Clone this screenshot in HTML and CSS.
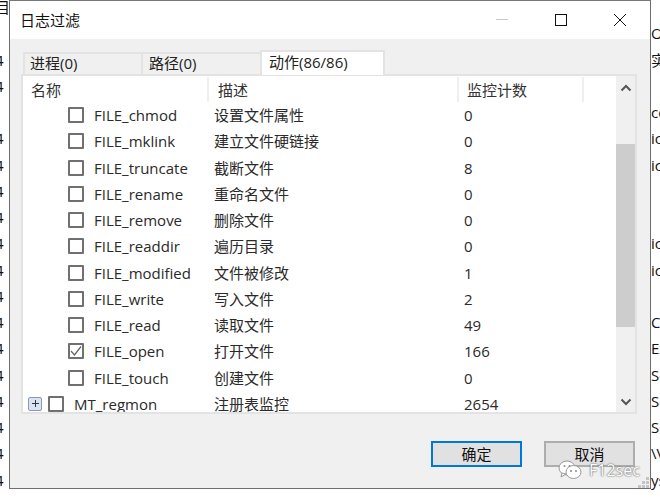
FILE: index.html
```html
<!DOCTYPE html>
<html lang="zh">
<head>
<meta charset="utf-8">
<title>日志过滤</title>
<link rel="stylesheet" href="styles.css">
</head>
<body>
<div class="desktop">
  <div class="strip strip-left">
    <div>目</div><div></div><div>4</div><div>4</div><div></div><div>4</div><div>4</div><div>4</div><div>4</div><div>4</div><div>4</div><div>4</div><div>4</div><div>4</div><div>4</div><div>4</div><div>4</div><div>4</div><div>4</div>
  </div>
  <div class="window">
    <div class="titlebar">
      <span class="title">日志过滤</span>
      <div class="controls">
        <svg class="ctl" width="14" height="14" viewBox="0 0 14 14"><path d="M1 6.500H13" stroke="#c8c8c8" fill="none"/></svg>
        <svg class="ctl" width="14" height="14" viewBox="0 0 14 14"><rect x="1.500" y="1.500" width="11" height="11" stroke="#111" fill="none"/></svg>
        <svg class="ctl" width="14" height="14" viewBox="0 0 14 14"><path d="M1 1L13 13M13 1L1 13" stroke="#111" fill="none"/></svg>
      </div>
    </div>
    <div class="body">
      <div class="tabs">
        <div class="tab tab-first">进程(0)</div>
        <div class="tab tab-second">路径(0)</div>
        <div class="tab tab-active">动作(86/86)</div>
      </div>
      <div class="panel">
        <div class="list">
          <div class="header">
            <div class="hcell hname">名称</div>
            <div class="hcell hdesc">描述</div>
            <div class="hcell hcount">监控计数</div>
            <div class="hcell hrest"></div>
          </div>
          <div class="row"><span class="name"><i class="box"></i>FILE_chmod</span><span class="desc">设置文件属性</span><span class="count">0</span></div>
          <div class="row"><span class="name"><i class="box"></i>FILE_mklink</span><span class="desc">建立文件硬链接</span><span class="count">0</span></div>
          <div class="row"><span class="name"><i class="box"></i>FILE_truncate</span><span class="desc">截断文件</span><span class="count">8</span></div>
          <div class="row"><span class="name"><i class="box"></i>FILE_rename</span><span class="desc">重命名文件</span><span class="count">0</span></div>
          <div class="row"><span class="name"><i class="box"></i>FILE_remove</span><span class="desc">删除文件</span><span class="count">0</span></div>
          <div class="row"><span class="name"><i class="box"></i>FILE_readdir</span><span class="desc">遍历目录</span><span class="count">0</span></div>
          <div class="row"><span class="name"><i class="box"></i>FILE_modified</span><span class="desc">文件被修改</span><span class="count">1</span></div>
          <div class="row"><span class="name"><i class="box"></i>FILE_write</span><span class="desc">写入文件</span><span class="count">2</span></div>
          <div class="row"><span class="name"><i class="box"></i>FILE_read</span><span class="desc">读取文件</span><span class="count">49</span></div>
          <div class="row"><span class="name"><i class="box"><svg width="12" height="12" viewBox="0 0 12 12"><path d="M1 6L4.500 10L11 1.500" stroke="#666" stroke-width="1.300" fill="none"/></svg></i>FILE_open</span><span class="desc">打开文件</span><span class="count">166</span></div>
          <div class="row"><span class="name"><i class="box"></i>FILE_touch</span><span class="desc">创建文件</span><span class="count">0</span></div>
          <div class="row"><span class="name name-top"><i class="plus"><svg width="9" height="9" viewBox="0 0 9 9"><path d="M4.500 1V8M1 4.500H8" stroke="#334" fill="none"/></svg></i><i class="box"></i>MT_regmon</span><span class="desc">注册表监控</span><span class="count">2654</span></div>
        </div>
        <div class="scrollbar">
          <svg class="arrow" width="12" height="8" viewBox="0 0 12 8"><path d="M1.500 6.500L6 2L10.500 6.500" stroke="#555" stroke-width="2" fill="none"/></svg>
          <div class="thumb"></div>
          <svg class="arrow" width="12" height="8" viewBox="0 0 12 8"><path d="M1.500 1.500L6 6L10.500 1.500" stroke="#555" stroke-width="2" fill="none"/></svg>
        </div>
      </div>
      <div class="buttons">
        <div class="btn btn-default">确定</div>
        <div class="btn">取消</div>
      </div>
    </div>
    <div class="watermark">
      <svg width="24" height="20" viewBox="0 0 24 20"><ellipse cx="9" cy="8" rx="8" ry="7" fill="#fff" stroke="#999"/><path d="M4 13L3 17L8 14Z" fill="#fff" stroke="#999"/><ellipse cx="15.500" cy="12" rx="7.500" ry="6.500" fill="#fff" stroke="#999"/><circle cx="6.500" cy="6" r="1" fill="#888"/><circle cx="11.500" cy="6" r="1" fill="#888"/><circle cx="13" cy="11" r="1" fill="#888"/><circle cx="18" cy="11" r="1" fill="#888"/></svg>
      <span>F12sec</span>
    </div>
    <svg class="grip" width="11" height="11" viewBox="0 0 11 11"><path d="M8 0h3v3H8zM4 4h3v3H4zM8 4h3v3H8zM0 8h3v3H0zM4 8h3v3H4zM8 8h3v3H8z" fill="#c4c4c4"/></svg>
  </div>
  <div class="strip strip-right">
    <div></div><div>O</div><div>实</div><div></div><div>ce</div><div>ic</div><div>ic</div><div></div><div></div><div>ic</div><div>ic</div><div></div><div>Cu</div><div>Ex</div><div>So</div><div>So</div><div>So</div><div>\V</div><div>ys</div>
  </div>
</div>
</body>
</html>
```
FILE: styles.css
```css
* { box-sizing: border-box; }
html, body { margin: 0; padding: 0; background: #fff; }
body {
  width: 660px;
  height: 498px;
  overflow: hidden;
  font-family: "Open Sans", "Noto Sans CJK SC", sans-serif;
  font-size: 15px;
  color: #222;
}
.desktop { display: flex; width: 660px; height: 498px; overflow: hidden; }

.strip { flex: none; margin-top: -6px; color: #111; }
.strip > div { height: 26.25px; line-height: 26.25px; white-space: nowrap; }
.strip-left { width: 9px; overflow: hidden; }
.strip-left > div { margin-left: -5px; }
.strip-right { width: 9px; overflow: hidden; }

.window {
  flex: none;
  position: relative;
  width: 642px;
  height: 489px;
  border: 1px solid #6e6e6e;
  border-top-color: #777;
  background: #f0f0f0;
  display: flex;
  flex-direction: column;
}
.titlebar {
  flex: none;
  height: 38px;
  background: #fff;
  display: flex;
  align-items: center;
  justify-content: space-between;
  padding-left: 10px;
}
.title { color: #111; line-height: 38px; }
.controls { display: flex; align-items: center; height: 38px; padding-right: 23px; gap: 45px; }
.ctl { display: block; }

.body { flex: 1; display: flex; flex-direction: column; padding: 10px 13px 0 11px; }
.tabs { display: flex; height: 25px; align-items: flex-end; padding-left: 2px; flex: none; }
.tab {
  height: 22px;
  line-height: 19px;
  border: 2px solid #e3e3e3;
  border-bottom: none;
  border-right-width: 0;
  color: #222;
}
.tab-first { width: 118px; padding-left: 5px; }
.tab-second { width: 119px; padding-left: 6px; }
.tab-active {
  width: 125px;
  height: 25px;
  line-height: 20px;
  background: #fff;
  border-right-width: 2px;
  padding-left: 7px;
  margin-bottom: -1px;
  position: relative;
  z-index: 1;
}
.panel {
  flex: none;
  width: 616px;
  height: 340px;
  border: 2px solid #e3e3e3;
  background: #fff;
  display: flex;
  overflow: hidden;
}
.list { flex: 1; overflow: hidden; }
.header { display: flex; height: 26px; padding-top: 1px; }
.hcell { height: 25px; line-height: 27px; border-right: 2px solid #efefef; color: #333; }
.hname { width: 186px; padding-left: 8px; }
.hdesc { width: 250px; padding-left: 9px; }
.hcount { width: 125px; padding-left: 8px; }
.hrest { flex: 1; border-right: none; }

.row { display: flex; height: 26.25px; line-height: 26px; white-space: nowrap; color: #2a2a2a; }
.name { width: 187px; display: flex; align-items: center; padding-left: 45px; }
.name-top { padding-left: 5px; }
.desc { width: 250px; padding-left: 4px; }
.count { padding-left: 4px; }
.box {
  flex: none;
  width: 16px;
  height: 16px;
  border: 2px solid #707070;
  border-radius: 1px;
  background: #fff;
  margin-right: 10px;
  display: flex;
  align-items: center;
  justify-content: center;
}
.plus {
  flex: none;
  width: 14px;
  height: 14px;
  margin-right: 6px;
  border: 1px solid #8a98b8;
  border-radius: 2px;
  background: #dbe2f2;
  display: flex;
  align-items: center;
  justify-content: center;
}
.scrollbar {
  flex: none;
  width: 19px;
  background: #f0f0f0;
  display: flex;
  flex-direction: column;
  align-items: center;
}
.arrow { display: block; flex: none; margin: 8px 0; }
.thumb { flex: none; width: 19px; height: 183px; background: #cdcdcd; margin-top: 44px; margin-bottom: 63px; }

.buttons { display: flex; justify-content: flex-end; gap: 22px; padding: 27px 2px 0 0; width: 616px; flex: none; }
.btn {
  width: 91px;
  height: 26px;
  line-height: 22px;
  text-align: center;
  background: #e1e1e1;
  border: 2px solid #adadad;
  color: #111;
}
.btn-default { border-color: #0078d7; }

.watermark {
  position: absolute;
  left: 548px;
  top: 459px;
  display: flex;
  align-items: center;
  gap: 7px;
  color: #fff;
  font-size: 16px;
  line-height: 20px;
  text-shadow: 0 0 2px #666, 0 0 1px #666;
}
.watermark svg { display: block; }
.grip { position: absolute; right: 1px; bottom: 0; display: block; }
```
